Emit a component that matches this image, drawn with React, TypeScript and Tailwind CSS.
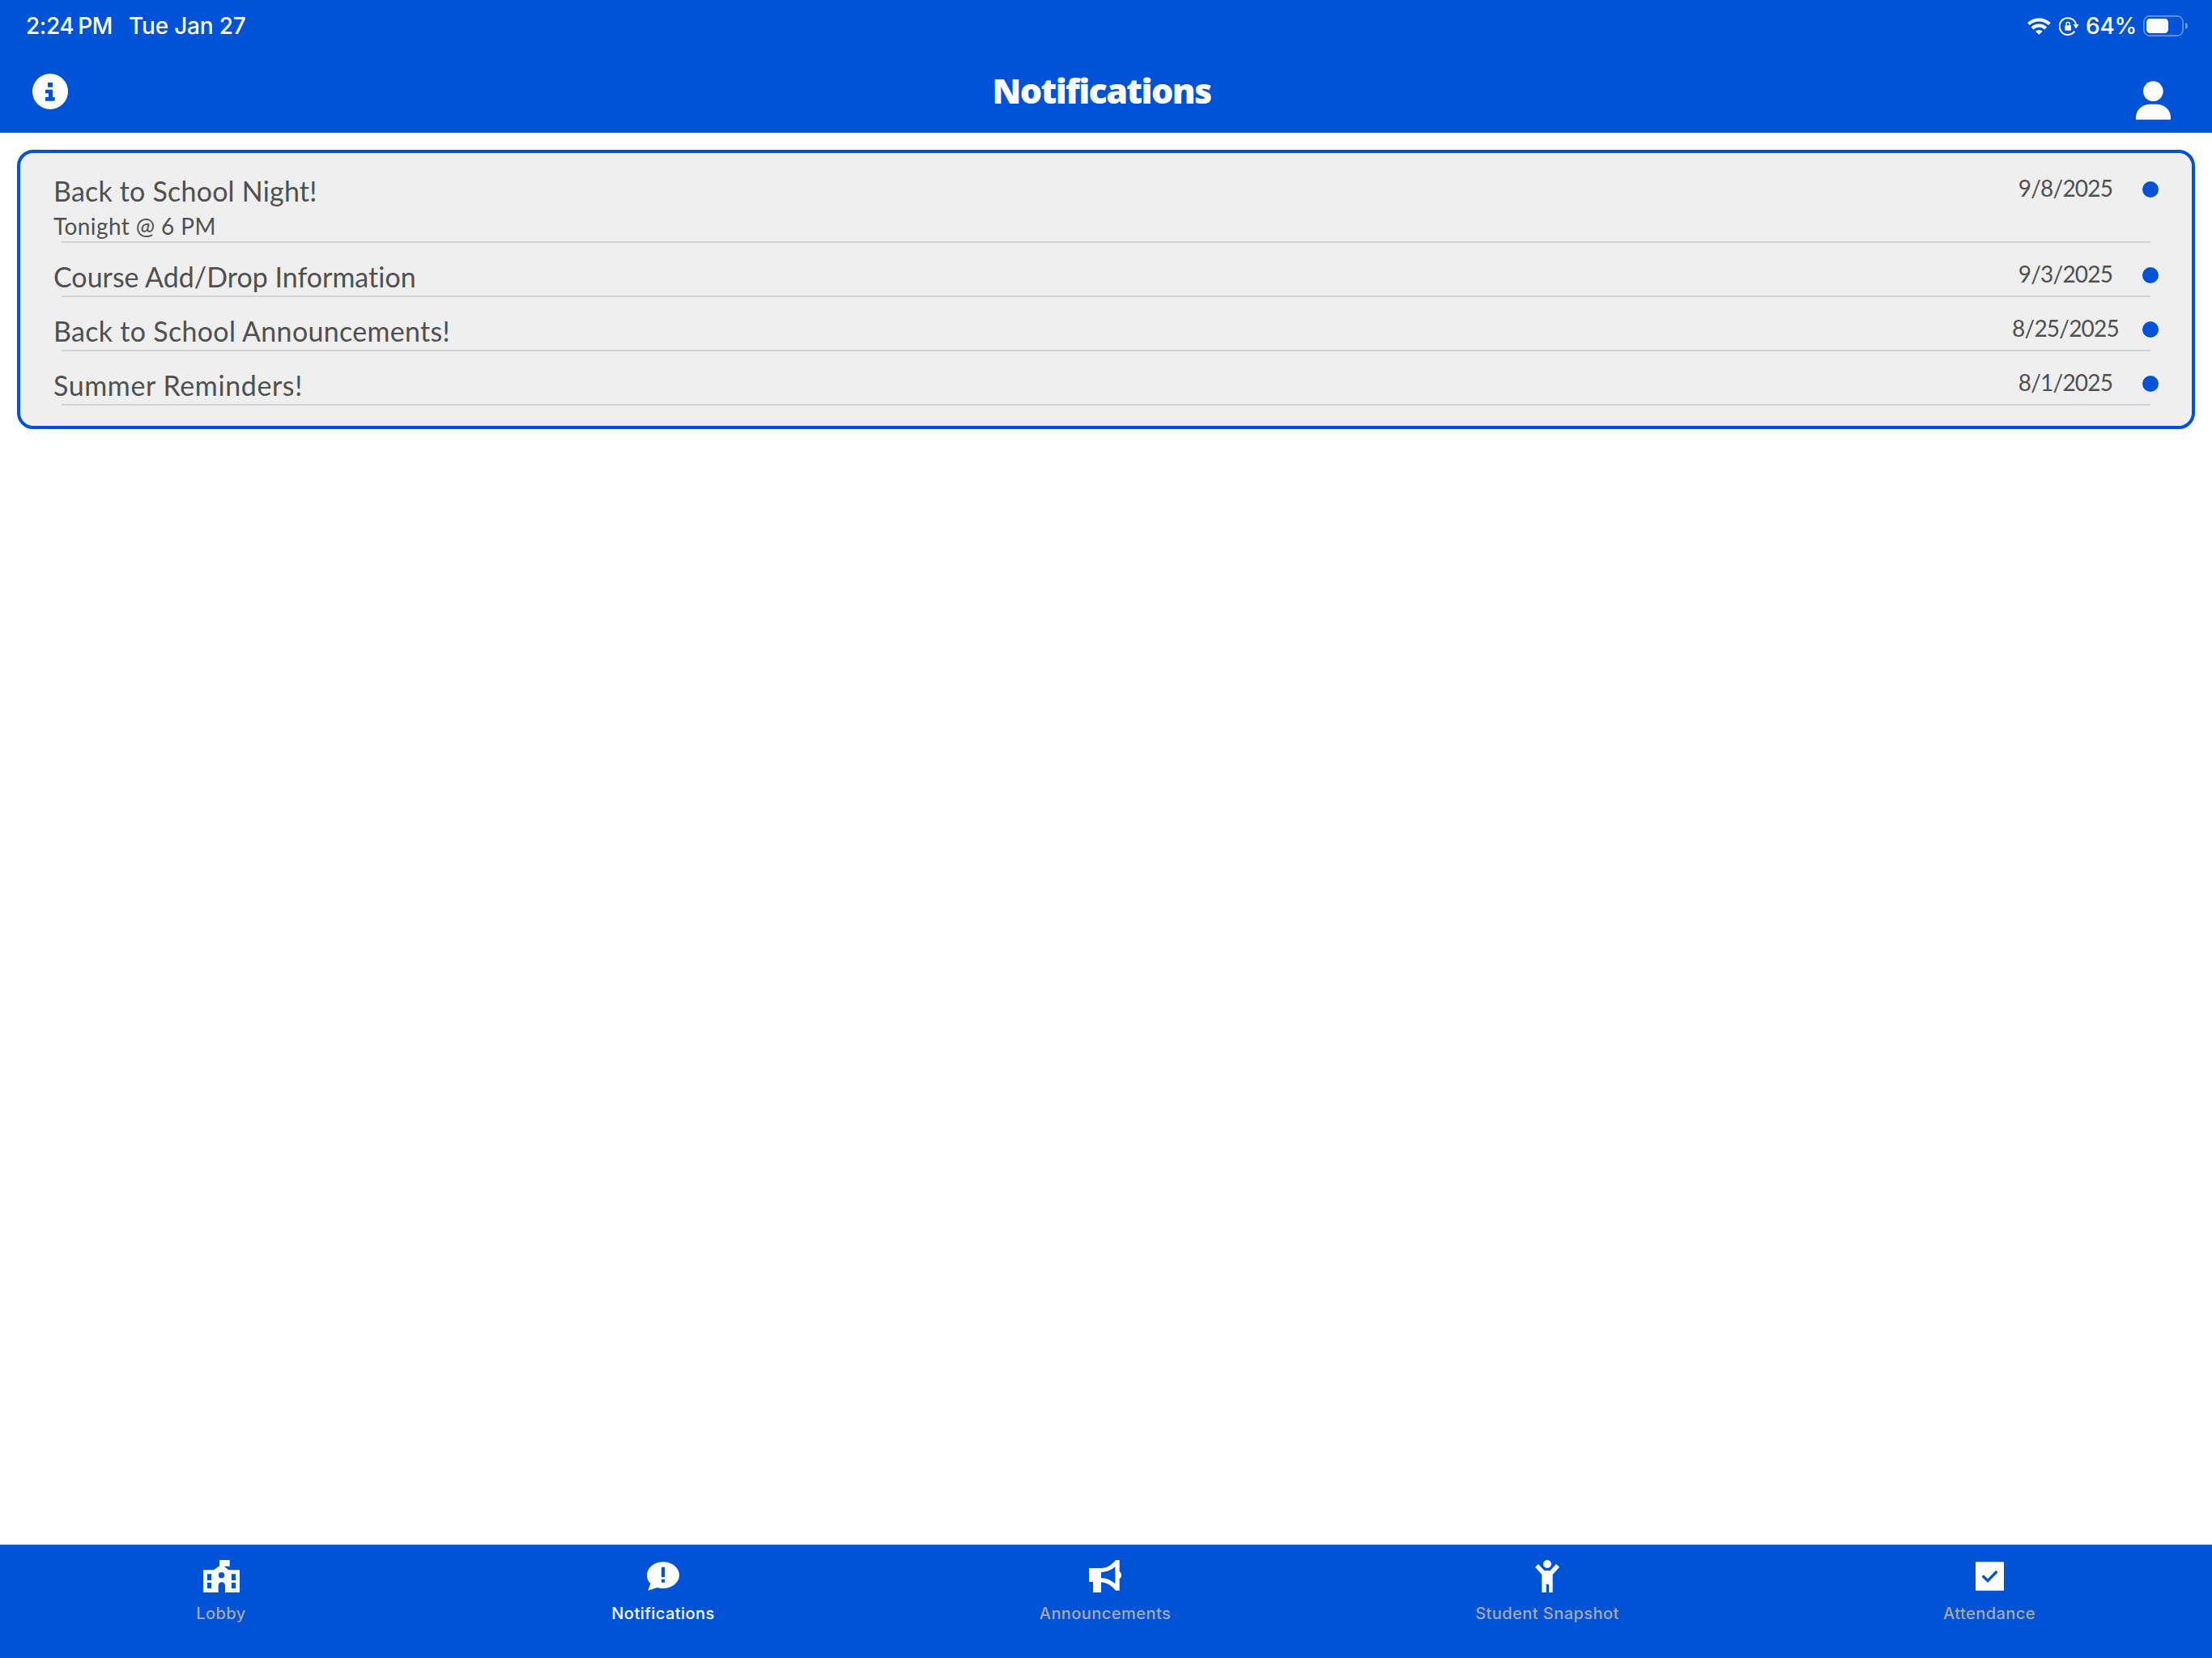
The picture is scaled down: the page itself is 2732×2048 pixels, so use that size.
import type { ReactNode } from "react";

interface Notification {
  id: number;
  title: string;
  body?: string;
  date: string;
  tracking: string;
}

interface Tab {
  label: string;
  icon: ReactNode;
  active?: boolean;
}

const notifications: Notification[] = [
  {
    id: 1,
    title: "Back to School Night!",
    body: "Tonight @ 6 PM",
    date: "9/8/2025",
    tracking: "tracking-[0.2px]",
  },
  { id: 2, title: "Course Add/Drop Information", date: "9/3/2025", tracking: "tracking-normal" },
  { id: 3, title: "Back to School Announcements!", date: "8/25/2025", tracking: "tracking-[0.3px]" },
  { id: 4, title: "Summer Reminders!", date: "8/1/2025", tracking: "tracking-[0.6px]" },
];

const tabs: Tab[] = [
  { label: "Lobby", icon: <LobbyIcon /> },
  { label: "Notifications", icon: <BubbleIcon />, active: true },
  { label: "Announcements", icon: <MegaphoneIcon /> },
  { label: "Student Snapshot", icon: <StudentIcon /> },
  { label: "Attendance", icon: <CheckIcon /> },
];

const App = () => {
  return (
    <div className="w-[2732px] h-[2048px] flex flex-col bg-white overflow-hidden font-['Lato',sans-serif]">
      <header className="h-[164px] shrink-0 bg-[#0052d6] text-white">
        <StatusBar />
        <div className="h-[100px] grid grid-cols-3 items-start pl-10 pr-[51px]">
          <InfoIcon />
          <h1 className="mt-7 text-center font-['Open_Sans',sans-serif] text-[43px] leading-10 font-extrabold tracking-[-1.6px]">
            Notifications
          </h1>
          <UserIcon />
        </div>
      </header>

      <main className="flex-1 pt-[21px] px-[21px]">
        <div className="h-[345px] pt-[5px] rounded-[20px] border-4 border-[#0052d6] bg-[#efefef]">
          {notifications.map((item) => (
            <NotificationRow key={item.id} item={item} />
          ))}
        </div>
      </main>

      <nav className="h-[140px] shrink-0 grid grid-cols-5 pr-0.5 bg-[#0052d6] font-['Inter',sans-serif]">
        {tabs.map((tab) => (
          <div
            key={tab.label}
            className={`flex flex-col items-center ${tab.active ? "text-white" : "text-[#a9a9a9]"}`}
          >
            <div className="h-[78px] flex items-center text-white">{tab.icon}</div>
            <span className="-mt-[5px] text-[20px] leading-6 font-[450] tracking-[0.45px]">{tab.label}</span>
          </div>
        ))}
      </nav>
    </div>
  );
};

function StatusBar() {
  return (
    <div className="h-16 pt-3 pl-8 pr-[30px] flex justify-between items-start font-['Inter',sans-serif] font-[450] text-[28px] leading-10">
      <div className="flex">
        <div className="w-[127px] flex gap-[5px]">
          <span className="tracking-[-0.4px]">2:24</span>
          <span className="tracking-[-0.6px]">PM</span>
        </div>
        <span className="tracking-[-0.2px]">Tue Jan 27</span>
      </div>
      <div className="flex items-center h-10">
        <WifiIcon />
        <LockIcon />
        <span className="ml-2 w-[71px] tracking-[-0.2px]">64%</span>
        <BatteryIcon />
      </div>
    </div>
  );
}

function NotificationRow({ item }: { item: Notification }) {
  return (
    <div className="text-[#505050]">
      <div className={`flex justify-between pl-[41px] pr-[41px] ${item.body ? "h-[104px]" : "h-[65px]"}`}>
        <div className="pt-[22px]">
          <h2 className={`text-[34px] leading-10 [font-variant-ligatures:none] ${item.tracking}`}>{item.title}</h2>
          {item.body && <p className="mt-[3px] text-[28px] leading-10 tracking-[0.4px]">{item.body}</p>}
        </div>
        <div className="flex items-start">
          <span className="mt-[18px] w-[190px] text-center text-[28px] leading-10 tracking-[-0.8px]">{item.date}</span>
          <span className="mt-[30px] size-5 rounded-full bg-[#0052d6]" />
        </div>
      </div>
      <div className="ml-[51px] mr-[51px] h-0.5 bg-[#d3d3d3]" />
    </div>
  );
}

function InfoIcon() {
  return (
    <svg className="mt-[27px] w-11 h-11" viewBox="0 0 132 132" fill="none">
      <circle cx="66" cy="66" r="66" fill="white" />
      <path d="M57 33h18v17H57zM48 59h27v28h8v14H48V87h12V73H48z" fill="#0052d6" />
    </svg>
  );
}

function UserIcon() {
  return (
    <svg className="mt-9 w-[43px] h-12 justify-self-end" viewBox="0 0 129 144" fill="currentColor">
      <circle cx="64" cy="38" r="37" />
      <path d="M0 143v-8C0 107 24 86 52 86h25c28 0 52 21 52 49v8z" />
    </svg>
  );
}

function WifiIcon() {
  return (
    <svg className="w-[29px] h-[21px]" viewBox="0 0 87 63" fill="none" stroke="white" strokeWidth="12">
      <path d="M4 23A56 56 0 0 1 82 23" />
      <path d="M18 39A35 35 0 0 1 68 39" />
      <path d="M43 62 30 50a20 20 0 0 1 26 0z" fill="white" stroke="none" />
    </svg>
  );
}

function LockIcon() {
  return (
    <svg className="ml-[10px] w-[25px] h-[23px]" viewBox="0 0 75 69" fill="none" stroke="white">
      <path d="M63 27A31 31 0 1 0 58 53" strokeWidth="6" />
      <path d="M53 28h20L63 43z" fill="white" strokeWidth="1" />
      <rect x="22" y="31" width="23" height="19" rx="3" fill="white" stroke="none" />
      <path d="M27 32v-6a6.500 6.500 0 0 1 13 0v6" strokeWidth="4" />
    </svg>
  );
}

function BatteryIcon() {
  return (
    <svg className="w-[55px] h-[26px]" viewBox="0 0 165 78" fill="none">
      <rect x="2.500" y="2.500" width="145" height="73" rx="22" stroke="white" strokeOpacity="0.4" strokeWidth="5" />
      <rect x="12" y="12" width="81" height="54" rx="14" fill="white" />
      <path d="M156 27c12 4 12 20 0 24z" fill="white" fillOpacity="0.45" />
    </svg>
  );
}

function LobbyIcon() {
  return (
    <svg className="w-[45px] h-10" viewBox="0 0 135 120" fill="currentColor" fillRule="evenodd">
      <path d="M60 0h38v23H77l17 14h41v83H81V94a12.500 12.500 0 0 0-25 0v26H0V37h39l21-15zM15 52v23h15V52zM15 84v21h15V84zM105 52v23h15V52zM105 84v21h15V84zM67.500 45a11 11 0 1 0 0 22 11 11 0 0 0 0-22z" />
    </svg>
  );
}

function BubbleIcon() {
  return (
    <svg className="w-10 h-9" viewBox="0 0 120 108" fill="none">
      <path d="M60 1c33 0 60 22 60 49s-27 49-60 49c-8 0-15-1-22-3L4 107l9-26C5 73 0 62 0 50 0 23 27 1 60 1z" fill="white" />
      <path d="M54 20h12v37H54zM54 65h12v12H54z" fill="#0052d6" />
    </svg>
  );
}

function MegaphoneIcon() {
  return (
    <svg className="w-10 h-10" viewBox="0 0 120 120" fill="currentColor" fillRule="evenodd">
      <path d="M0 30h45c24 0 40-14 54-30h14v43c9 4 9 23 0 27v43H99C85 97 70 84 45 82v38H15V81H0zM45 45v22c24 0 38 10 52 21V25C83 36 69 44 45 45z" />
    </svg>
  );
}

function StudentIcon() {
  return (
    <svg className="w-[30px] h-10" viewBox="0 0 90 120" fill="currentColor">
      <circle cx="45" cy="15" r="15" />
      <path d="M12 15l22 24h22l22-24 12 11-25 28v66H51V90H41v30H25V54L0 26z" />
    </svg>
  );
}

function CheckIcon() {
  return (
    <svg className="w-[35px] h-9" viewBox="0 0 105 108" fill="none">
      <path d="M0 1h105v106H0z" fill="white" />
      <path d="M26 52l19 19 34-35" stroke="#0052d6" strokeWidth="10" />
    </svg>
  );
}

export default App;
